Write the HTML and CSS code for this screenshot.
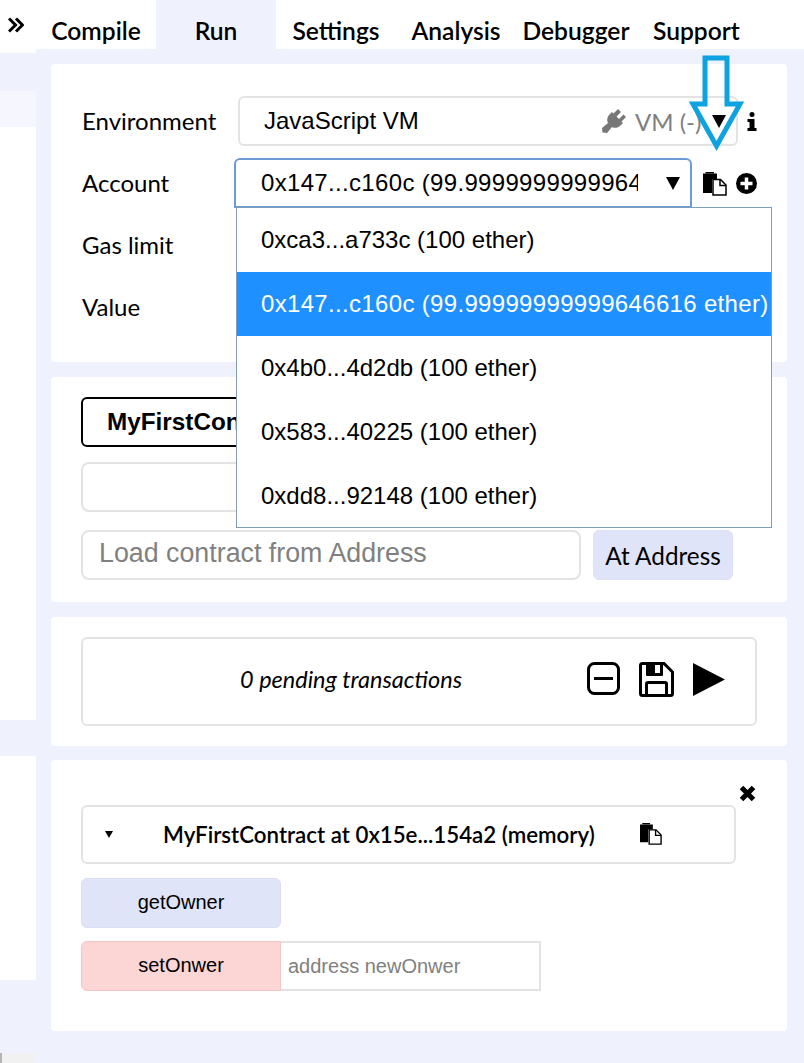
FILE: index.html
```html
<!DOCTYPE html>
<html lang="en">
<head>
  <meta charset="UTF-8">
  <title>Run</title>
  <link rel="stylesheet" href="styles.css">
</head>
<body>

  <div class="page">

    <div class="side">
      <div class="side-top">
        <svg class="side-toggle" width="16" height="16" viewBox="0 0 16 16"><path d="M1 1.5 L7.5 8 L1 14.5 M8 1.5 L14.5 8 L8 14.5" fill="none" stroke="#000" stroke-width="3"/></svg>
      </div>
      <div class="side-gap-a"></div>
      <div class="side-pale"></div>
      <div class="side-white-a"></div>
      <div class="side-gap-b"></div>
      <div class="side-white-b"></div>
      <div class="side-gap-c"></div>
      <div class="side-scroll"></div>
    </div>

    <div class="main">
      <div class="tabs">
        <div class="tab">Compile</div>
        <div class="tab tab-active">Run</div>
        <div class="tab">Settings</div>
        <div class="tab">Analysis</div>
        <div class="tab">Debugger</div>
        <div class="tab tab-last">Support</div>
      </div>

      <div class="cards">

        <div class="card card-settings">
          <div class="row">
            <div class="row-label">Environment</div>
            <div class="select select-env">
              <span class="select-text">JavaScript VM</span>
              <svg class="plug" width="26" height="26" viewBox="0 0 26 26"><path d="M17 1 L20 4 L15.5 8.5 L18 11 L22.5 6.5 L25 9 L20.5 13.5 L22 15 L19.5 17.5 C17 20 13.5 20.5 11 19 L6 25 L1.5 24.5 L1 20 L7 15 C5.5 12.5 6 9 8.5 6.500 L11 4 L12.500 5.500 Z" fill="#777"/></svg>
              <span class="vm-text">VM (-)</span>
              <svg class="caret" width="14" height="13" viewBox="0 0 14 13"><path d="M0 0 H14 L7 13 Z"/></svg>
            </div>
            <svg class="icon-info" width="10" height="19" viewBox="0 0 10 19"><circle cx="5" cy="2.500" r="2.500"/><path d="M0.500 7 H7.500 V16 H9.500 V19 H0.500 V16 H2.500 V10 H0.500 Z"/></svg>
          </div>
          <div class="row">
            <div class="row-label">Account</div>
            <div class="select select-account">
              <span class="select-clip">0x147...c160c (99.99999999999646616 ether)</span>
              <svg class="caret" width="14" height="13" viewBox="0 0 14 13"><path d="M0 0 H14 L7 13 Z"/></svg>
            </div>
            <svg class="icon-copy" width="24" height="24" viewBox="0 0 24 24"><path d="M0 1.500 H14 V7 H9 V21 H0 Z"/><path d="M2.500 0 H11 V1.500 H2.500 Z"/><path d="M10 7.500 H17.500 L23 13 V23 H10 Z" fill="#fff" stroke="#000" stroke-width="1.500"/><path d="M17 7.500 V13.500 H23" fill="none" stroke="#000" stroke-width="1.500"/></svg>
            <svg class="icon-plus" width="21" height="21" viewBox="0 0 21 21"><circle cx="10.500" cy="10.500" r="10.500"/><path d="M4.500 10.500 H16.500 M10.500 4.500 V16.500" stroke="#fff" stroke-width="3.500"/></svg>
          </div>
          <div class="row">
            <div class="row-label">Gas limit</div>
          </div>
          <div class="row">
            <div class="row-label">Value</div>
          </div>
        </div>

        <div class="card card-deploy">
          <div class="contract-picker">MyFirstContract</div>
          <div class="deploy-box"></div>
          <div class="address-row">
            <div class="address-input">Load contract from Address</div>
            <div class="address-btn">At Address</div>
          </div>
        </div>

        <div class="card card-pending">
          <div class="pending-box">
            <span class="pending-text">0 pending transactions</span>
            <svg class="icon-minus" width="33" height="33" viewBox="0 0 33 33"><rect x="1.500" y="1.500" width="30" height="30" rx="6" fill="none" stroke="#000" stroke-width="3"/><path d="M7 16.500 H26" stroke="#000" stroke-width="3"/></svg>
            <svg class="icon-save" width="35" height="35" viewBox="0 0 35 35"><path d="M1.500 3.500 Q1.500 1.500 3.500 1.500 H25 L33.500 10 V31.500 Q33.500 33.500 31.500 33.500 H3.500 Q1.500 33.500 1.500 31.500 Z" fill="none" stroke="#000" stroke-width="3"/><path d="M7 1.500 H24 V13 Q24 14 23 14 H8 Q7 14 7 13 Z"/><rect x="16" y="3" width="5" height="8" fill="#fff"/><path d="M7.500 33 V22 Q7.500 20.500 9 20.500 H26 Q27.500 20.500 27.500 22 V33" fill="none" stroke="#000" stroke-width="3"/></svg>
            <svg class="icon-play" width="32" height="33" viewBox="0 0 32 33"><path d="M0 0 L32 16.500 L0 33 Z"/></svg>
          </div>
        </div>

        <div class="card card-instance">
          <svg class="icon-close" width="17" height="17" viewBox="0 0 17 17"><path d="M2.500 2.500 L14.500 14.500 M14.500 2.500 L2.500 14.500" stroke="#000" stroke-width="5"/></svg>
          <div class="instance-box">
            <svg class="instance-caret" width="8" height="7" viewBox="0 0 8 7"><path d="M0 0 H8 L4 7 Z"/></svg>
            <span class="instance-title">MyFirstContract at 0x15e...154a2 (memory)</span>
            <svg class="icon-copy-small" width="22" height="22" viewBox="0 0 24 24"><path d="M0 1.500 H14 V7 H9 V21 H0 Z"/><path d="M2.500 0 H11 V1.500 H2.500 Z"/><path d="M10 7.500 H17.500 L23 13 V23 H10 Z" fill="#fff" stroke="#000" stroke-width="1.500"/><path d="M17 7.500 V13.500 H23" fill="none" stroke="#000" stroke-width="1.500"/></svg>
          </div>
          <div class="fn-btn fn-call">getOwner</div>
          <div class="fn-row">
            <div class="fn-btn fn-send">setOnwer</div>
            <div class="fn-input">address newOnwer</div>
          </div>
        </div>

      </div>
    </div>

  </div>

  <!-- account dropdown, open over the cards -->
  <div class="dropdown">
    <div class="dropdown-item">0xca3...a733c (100 ether)</div>
    <div class="dropdown-item dropdown-selected">0x147...c160c (99.99999999999646616 ether)</div>
    <div class="dropdown-item">0x4b0...4d2db (100 ether)</div>
    <div class="dropdown-item">0x583...40225 (100 ether)</div>
    <div class="dropdown-item">0xdd8...92148 (100 ether)</div>
  </div>

  <!-- annotation arrow -->
  <svg class="callout" width="56" height="100" viewBox="0 0 56 100"><path d="M16 3 H38 V49 H51 L27.500 91 L4 49 H16 Z" fill="none" stroke="#0ea2e0" stroke-width="5"/></svg>

</body>
</html>
```

FILE: styles.css
```css
* {
  box-sizing: border-box;
}

body {
  margin: 0;
  height: 1063px;
  overflow: hidden;
  background: #eff1fd;
  color: #000;
  font-family: 'Lato', sans-serif;
  font-size: 24px;
  position: relative;
}

.page {
  display: flex;
  height: 1063px;
}

/* left strip */
.side {
  width: 36px;
  flex: none;
  display: flex;
  flex-direction: column;
}

.side-top {
  height: 53px;
  background: #fff;
  padding: 17px 0 0 8px;
}

.side-toggle {
  display: block;
}

.side-gap-a {
  height: 38px;
}

.side-pale {
  height: 36px;
  background: #f5f6fe;
}

.side-white-a {
  height: 593px;
  background: #fff;
}

.side-gap-b {
  height: 36px;
}

.side-white-b {
  height: 224px;
  background: #fff;
}

.side-gap-c {
  height: 73px;
}

.side-scroll {
  height: 10px;
  background: #f1f1f1;
  border-left: 2px solid #b5b5b5;
}

/* main column */
.main {
  flex: 1;
}

.tabs {
  display: flex;
  height: 49px;
  background: #fff;
}

.tab {
  width: 120px;
  padding-top: 13px;
  height: 49px;
  text-align: center;
  font-size: 24.6px;
  font-weight: 600;
  line-height: 36px;
  white-space: nowrap;
}

.tab-active {
  background: #eff1fd;
}

.tab-last {
  text-align: left;
  padding-left: 17px;
}

.cards {
  padding: 15px 17px 0 15px;
  display: flex;
  flex-direction: column;
  gap: 15px;
}

.card {
  background: #fff;
  border-radius: 4px;
  padding: 20px 30px;
  position: relative;
}

/* settings */
.card-settings {
  height: 298px;
  padding-top: 32px;
  padding-right: 0;
}

.row {
  display: flex;
  align-items: center;
  height: 50px;
  margin-bottom: 12px;
  position: relative;
}

.row-label {
  width: 154px;
  flex: none;
  padding-left: 1px;
  position: relative;
  top: -1px;
}

.select {
  height: 50px;
  display: flex;
  align-items: center;
  border-radius: 6px;
  font-family: 'Liberation Sans', sans-serif;
  font-size: 24px;
}

.select-env {
  width: 500px;
  margin-left: 3px;
  border: 2px solid #e3e3e3;
  padding-left: 24px;
}

.select-text {
  flex: 1;
}

.plug {
  margin-right: 8px;
}

.vm-text {
  font-family: 'Lato', sans-serif;
  font-size: 24px;
  color: #808080;
  width: 77px;
  flex: none;
}

.select-env .caret {
  margin-right: 10px;
}

.select-account {
  width: 458px;
  margin-left: -1px;
  border: 2px solid #6f9ad8;
  border-bottom-left-radius: 0;
  border-bottom-right-radius: 0;
  padding-left: 25px;
}

.select-clip {
  width: 377px;
  flex: none;
  overflow: hidden;
  white-space: nowrap;
  letter-spacing: 0.33px;
}

.select-account .caret {
  margin-left: 28px;
}

.caret {
  display: block;
  flex: none;
}

.icon-info {
  margin-left: 9px;
}

.icon-copy {
  margin-left: 11px;
  margin-top: 1px;
}

.icon-plus {
  margin-left: 9px;
}

/* deploy */
.card-deploy {
  height: 225px;
}

.contract-picker {
  width: 300px;
  height: 50px;
  border: 2px solid #000;
  border-radius: 6px;
  padding-left: 24px;
  font-family: 'Liberation Sans', sans-serif;
  font-size: 24.3px;
  font-weight: bold;
  line-height: 46px;
  white-space: nowrap;
}

.deploy-box {
  width: 300px;
  height: 50px;
  margin-top: 15px;
  border: 2px solid #e3e3e3;
  border-radius: 8px;
}

.address-row {
  display: flex;
  margin-top: 18px;
  gap: 12px;
}

.address-input {
  width: 500px;
  height: 50px;
  border: 2px solid #e3e3e3;
  border-radius: 8px;
  padding-left: 16px;
  font-family: 'Liberation Sans', sans-serif;
  font-size: 26.8px;
  line-height: 43px;
  color: #808080;
}

.address-btn {
  width: 140px;
  height: 50px;
  background: #e0e4f8;
  border: 1px solid #dde1f6;
  border-radius: 6px;
  text-align: center;
  font-size: 24.3px;
  line-height: 49px;
}

/* pending */
.card-pending {
  height: 129px;
  margin-bottom: -1px;
}

.pending-box {
  width: 676px;
  height: 89px;
  border: 2px solid #e3e3e3;
  border-radius: 6px;
  display: flex;
  align-items: center;
  padding-left: 157px;
}

.pending-text {
  width: 348px;
  flex: none;
  font-size: 23.5px;
  font-style: italic;
  position: relative;
  top: -3px;
}

.icon-minus {
  position: relative;
  top: -3px;
  left: -1px;
}

.icon-save {
  margin-left: 18px;
  position: relative;
  top: -2px;
}

.icon-play {
  margin-left: 19px;
  position: relative;
  top: -2px;
}

/* deployed instance */
.card-instance {
  height: 271px;
  padding-top: 45px;
}

.icon-close {
  position: absolute;
  top: 25px;
  left: 688px;
}

.instance-box {
  width: 655px;
  height: 59px;
  border: 2px solid #e3e3e3;
  border-radius: 6px;
  display: flex;
  align-items: center;
  padding-left: 22px;
}

.instance-title {
  margin-left: 50px;
  font-size: 22.3px;
  font-weight: 600;
  white-space: nowrap;
}

.icon-copy-small {
  margin-left: 45px;
  position: relative;
  top: -1px;
}

.fn-btn {
  width: 200px;
  height: 50px;
  border-radius: 6px;
  text-align: center;
  font-family: 'Liberation Sans', sans-serif;
  font-size: 20px;
  line-height: 47px;
}

.fn-call {
  margin-top: 14px;
  background: #e0e4f8;
  border: 1px solid #d9def6;
}

.fn-row {
  display: flex;
  margin-top: 13px;
}

.fn-send {
  background: #fcd5d5;
  border: 1px solid #f3c5c5;
  border-top-right-radius: 0;
  border-bottom-right-radius: 0;
}

.fn-input {
  width: 260px;
  height: 50px;
  border: 2px solid #e3e3e3;
  border-left: none;
  padding-left: 7px;
  font-family: 'Liberation Sans', sans-serif;
  font-size: 20px;
  line-height: 46px;
  color: #808080;
}

/* overlays */
.dropdown {
  position: absolute;
  left: 236px;
  top: 207px;
  width: 536px;
  height: 321px;
  background: #fff;
  border: 1px solid #7f9db9;
  font-family: 'Liberation Sans', sans-serif;
  font-size: 24px;
}

.dropdown-item {
  height: 64px;
  line-height: 64px;
  padding-left: 24px;
  white-space: nowrap;
}

.dropdown-selected {
  background: #1e90ff;
  color: #fff;
  letter-spacing: 0.33px;
}

.callout {
  position: absolute;
  left: 689px;
  top: 55px;
}
```
